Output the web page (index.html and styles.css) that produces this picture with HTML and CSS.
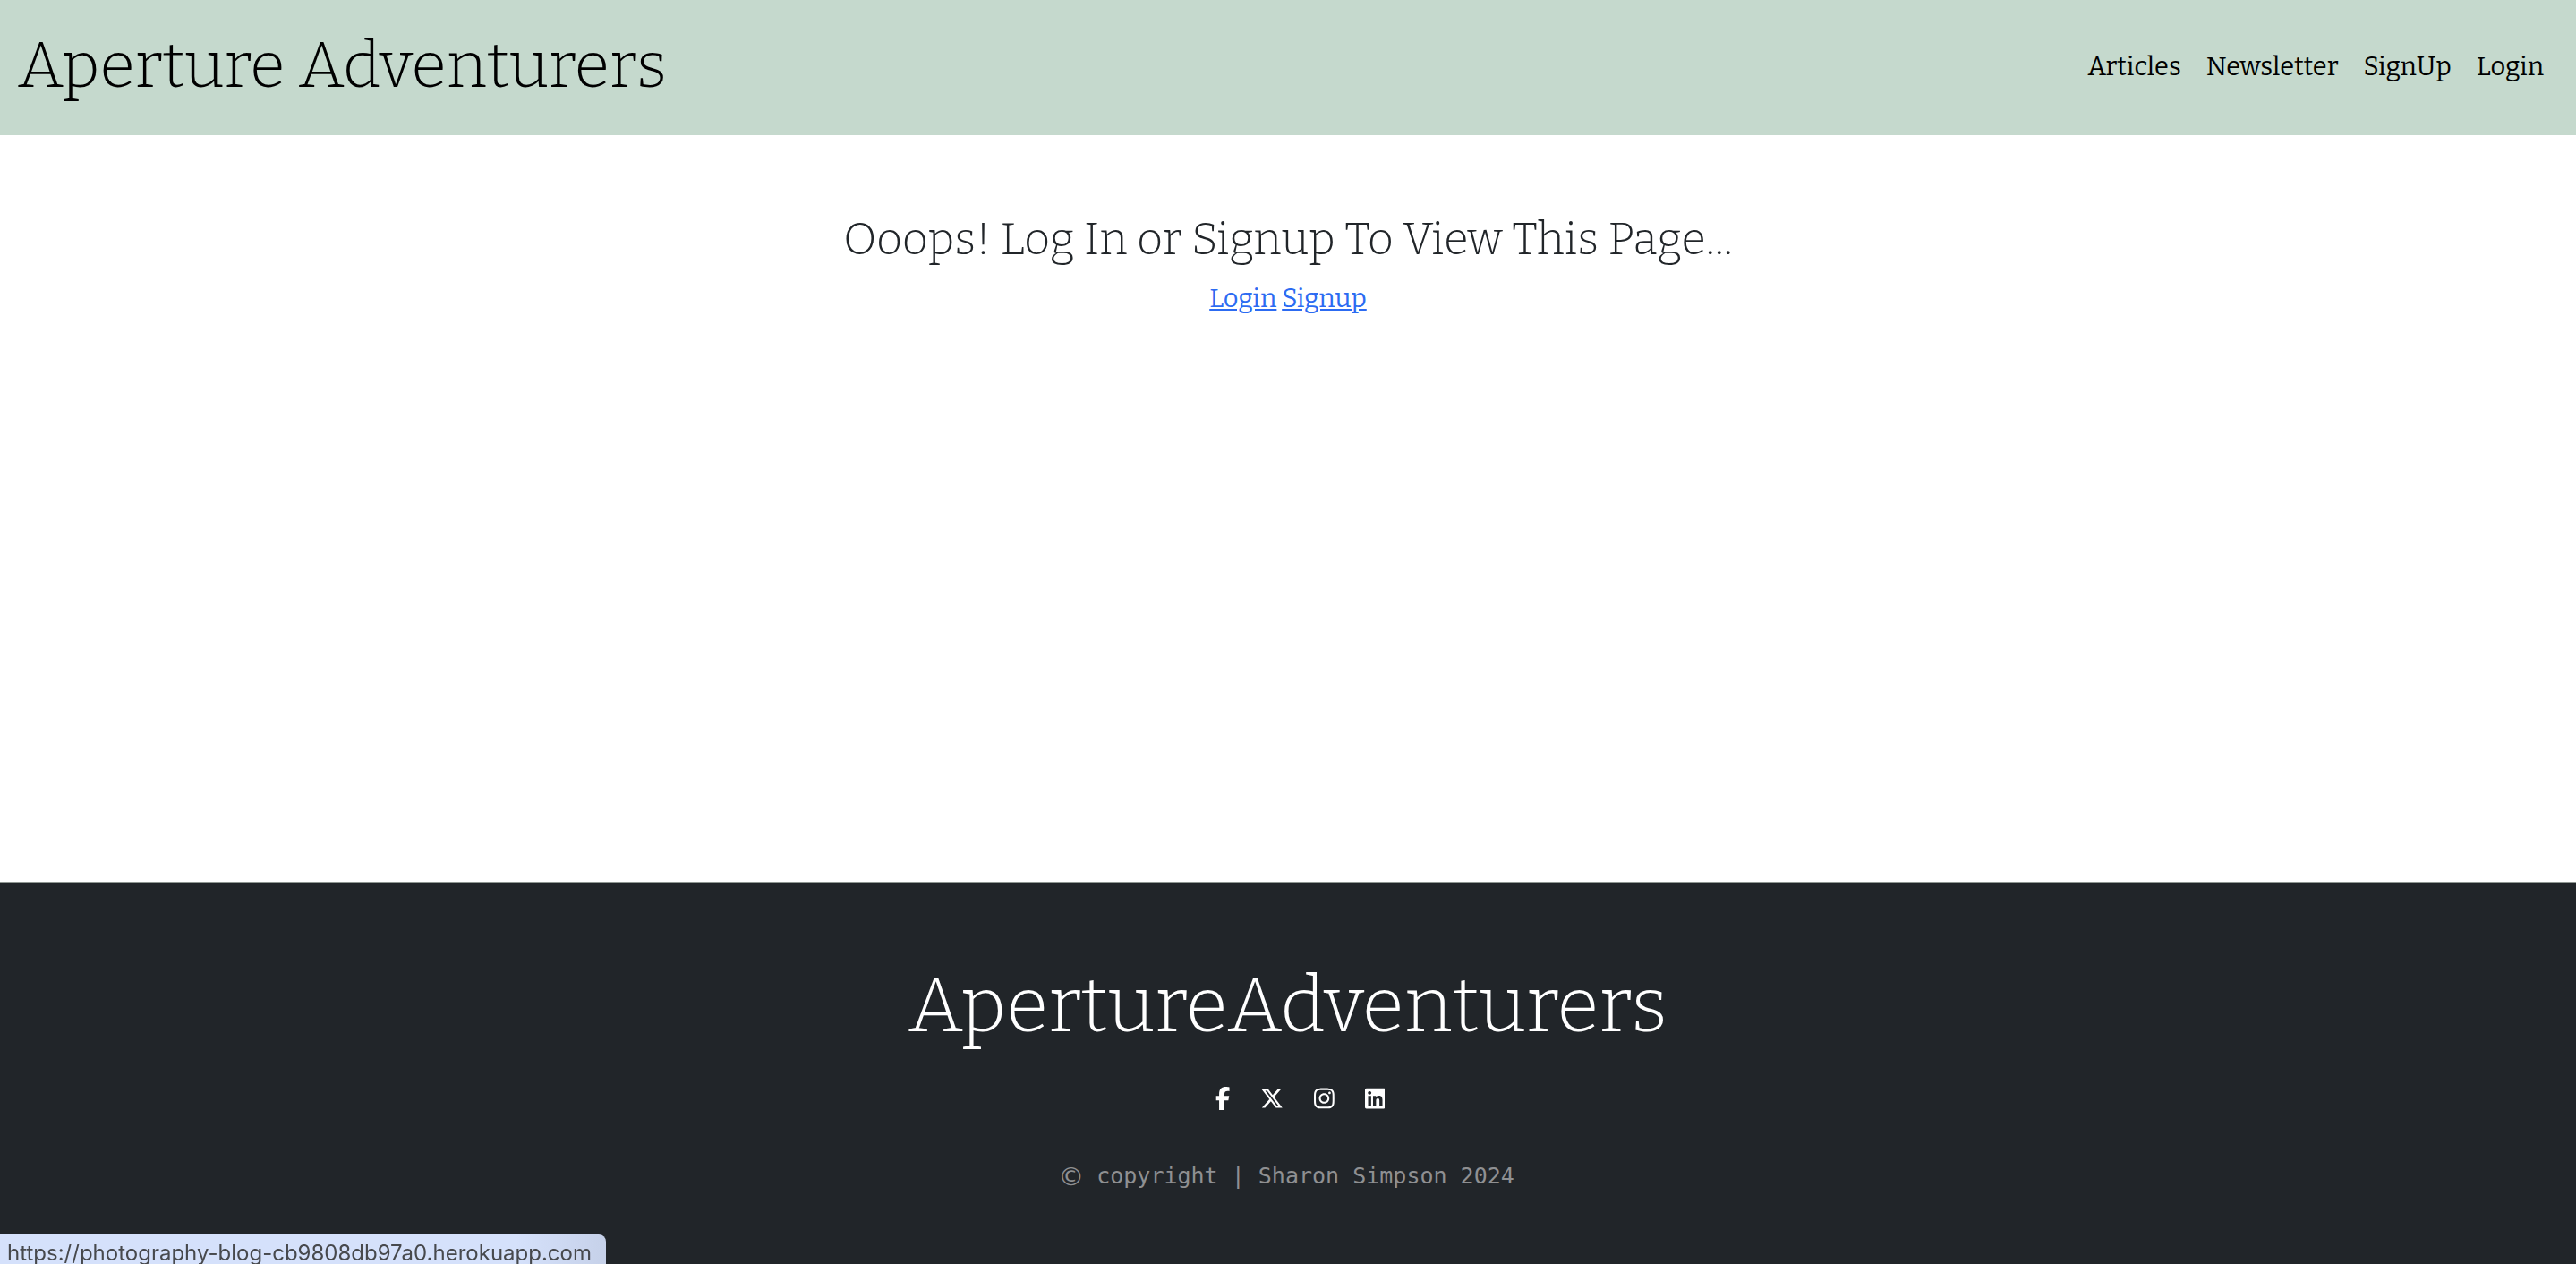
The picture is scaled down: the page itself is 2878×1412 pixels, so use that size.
FILE: index.html
```html
<!DOCTYPE html>
<html lang="en">
<head>
<meta charset="utf-8">
<meta name="viewport" content="width=device-width, initial-scale=1">
<title>Aperture Adventurers</title>
<link rel="stylesheet" href="styles.css">
</head>
<body>
<header class="navbar">
  <a class="brand" href="#">Aperture Adventurers</a>
  <nav class="nav-links" aria-label="Main">
    <a href="#">Articles</a>
    <a href="#">Newsletter</a>
    <a href="#">SignUp</a>
    <a href="#">Login</a>
  </nav>
</header>
<main class="notice">
  <h1 class="notice-title">Ooops! Log In or Signup To View This Page...</h1>
  <p class="notice-links"><a href="#">Login</a> <a href="#">Signup</a></p>
</main>
<footer class="footer">
  <h2 class="footer-title">ApertureAdventurers</h2>
  <div class="social">
    <a href="#" aria-label="Facebook"><svg viewBox="0 0 320 512"><path d="M80 299.3V512H196V299.3h86.5l18-97.8H196V166.900c0-51.700 20.300-71.500 72.700-71.500c16.300 0 29.400 .4 37 1.200V7.900C291.400 4 256.400 0 236.200 0C129.300 0 80 50.500 80 159.400v42.100H14v97.800H80z"/></svg></a>
    <a href="#" aria-label="X"><svg viewBox="0 0 512 512"><path d="M389.200 48h70.600L305.600 224.200 487 464H345L233.700 318.600 106.500 464H35.800L200.700 275.500 26.800 48H172.400L272.900 180.900 389.200 48zM364.400 421.800h39.100L151.100 88h-42L364.400 421.800z"/></svg></a>
    <a href="#" aria-label="Instagram"><svg viewBox="0 0 448 512"><path d="M224.100 141c-63.600 0-114.900 51.300-114.900 114.900s51.300 114.900 114.900 114.900S339 319.500 339 255.900 287.700 141 224.100 141zm0 189.600c-41.100 0-74.700-33.500-74.700-74.700s33.500-74.700 74.700-74.700 74.700 33.500 74.700 74.700-33.600 74.700-74.700 74.700zm146.400-194.300c0 14.900-12 26.800-26.800 26.800-14.900 0-26.800-12-26.800-26.800s12-26.800 26.800-26.800 26.800 12 26.800 26.800zm76.100 27.200c-1.700-35.900-9.900-67.700-36.200-93.900-26.200-26.200-58-34.400-93.900-36.200-37-2.100-147.900-2.100-184.900 0-35.800 1.700-67.600 9.900-93.900 36.100s-34.400 58-36.200 93.900c-2.100 37-2.100 147.900 0 184.900 1.700 35.900 9.900 67.700 36.200 93.900s58 34.400 93.900 36.200c37 2.100 147.900 2.100 184.900 0 35.900-1.700 67.700-9.900 93.900-36.200 26.200-26.200 34.400-58 36.200-93.900 2.100-37 2.100-147.800 0-184.800zM398.800 388c-7.800 19.600-22.900 34.700-42.600 42.600-29.500 11.700-99.500 9-132.100 9s-102.700 2.600-132.100-9c-19.600-7.800-34.700-22.900-42.600-42.600-11.700-29.500-9-99.500-9-132.100s-2.600-102.700 9-132.100c7.800-19.600 22.900-34.700 42.600-42.600 29.500-11.700 99.500-9 132.100-9s102.700-2.600 132.100 9c19.600 7.800 34.700 22.900 42.600 42.600 11.700 29.500 9 99.500 9 132.100s2.700 102.700-9 132.100z"/></svg></a>
    <a href="#" aria-label="LinkedIn"><svg viewBox="0 0 448 512"><path d="M416 32H31.900C14.300 32 0 46.500 0 64.300v383.400C0 465.500 14.300 480 31.900 480H416c17.600 0 32-14.500 32-32.300V64.300c0-17.800-14.400-32.300-32-32.300zM135.400 416H69V202.200h66.500V416zm-33.200-243c-21.300 0-38.500-17.300-38.500-38.500S80.900 96 102.200 96c21.200 0 38.500 17.300 38.500 38.500 0 21.300-17.200 38.500-38.500 38.500zm282.100 243h-66.400V312c0-24.800-.5-56.700-34.500-56.700-34.600 0-39.900 27-39.900 54.900V416h-66.400V202.200h63.700v29.200h.9c8.900-16.800 30.600-34.500 62.900-34.500 67.200 0 79.700 44.300 79.700 101.900V416z"/></svg></a>
  </div>
  <p class="copyright"><span class="copy-mark">©</span> <span>copyright | Sharon Simpson 2024</span></p>
</footer>
<div class="status-url">https://photography-blog-cb9808db97a0.herokuapp.com</div>
</body>
</html>
```
FILE: styles.css
```css
* {
  box-sizing: border-box;
}

body {
  margin: 0;
  min-height: 100vh;
  display: flex;
  flex-direction: column;
  background: #fff;
  color: #212529;
  font-family: Bitter, "DejaVu Serif Condensed", "DejaVu Serif", serif;
  font-size: 29px;
  line-height: 40px;
}

h1,
h2,
p {
  margin: 0;
}

h1,
h2 {
  font-weight: 300;
}

.navbar {
  display: flex;
  align-items: center;
  justify-content: space-between;
  padding: 25px 36px 30px 20px;
  background: #c5d9cd;
}

.navbar a {
  color: #000;
  text-decoration: none;
}

.navbar .brand {
  font-size: 72px;
  font-weight: 300;
  line-height: 96px;
}

.nav-links {
  display: flex;
  gap: 28px;
  padding-top: 3px;
}

.notice {
  flex: 1;
  padding: 84px 24px;
  text-align: center;
}

.notice-title {
  font-size: 50px;
  line-height: 64px;
  margin-bottom: 15px;
}

.notice-links a {
  color: #2c6bf2;
}

.footer {
  padding: 78px 24px 78px;
  border-top: 1px solid #8f9792;
  background: #212529;
  color: #fff;
  text-align: center;
}

.footer-title {
  font-size: 86px;
  line-height: 120px;
}

.social {
  display: flex;
  align-items: center;
  justify-content: center;
  gap: 34px;
  margin: 30px 0 54px 27px;
}

.social a {
  display: block;
}

.social svg {
  display: block;
  height: 26px;
  fill: #fff;
}

.copyright {
  display: flex;
  align-items: center;
  justify-content: center;
  gap: 14px;
  padding-right: 4px;
  color: #8f9092;
  font-family: "DejaVu Sans Mono", monospace;
  font-size: 25px;
}

.copy-mark {
  font-family: "DejaVu Sans", sans-serif;
  font-size: 29px;
}

.status-url {
  position: fixed;
  left: 0;
  bottom: 0;
  padding: 3px 16px 0 8px;
  height: 33px;
  border-top-right-radius: 8px;
  background: linear-gradient(90deg, #d5e1fb 85%, #c6d1e9);
  color: #47494d;
  font-family: Inter, sans-serif;
  font-size: 24px;
  line-height: 36px;
}
```
